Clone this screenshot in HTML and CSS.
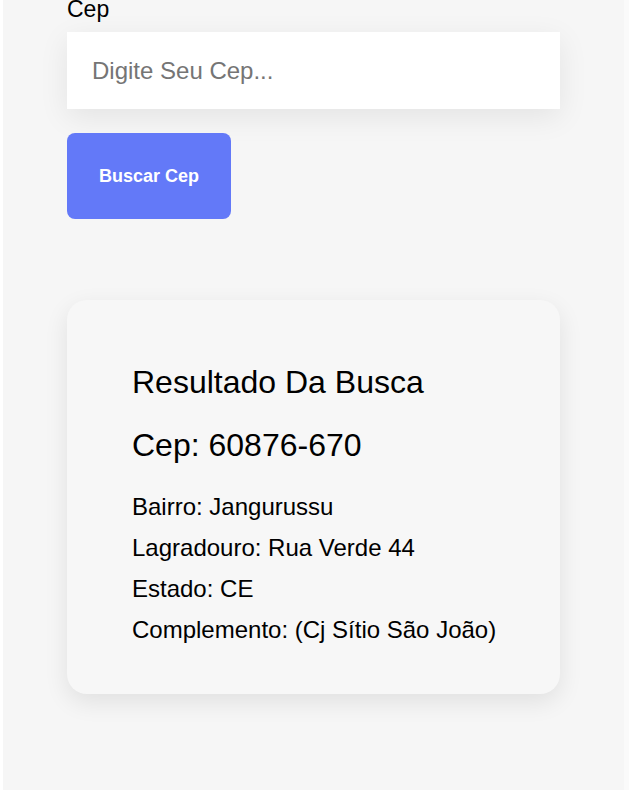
FILE: index.html
```html
<!DOCTYPE html>
<html lang="pt-BR">
<head>
<meta charset="utf-8">
<title>Buscar Cep</title>
<link rel="stylesheet" href="styles.css">
</head>
<body>
<div class="page">
  <div class="content">
    <label class="label" for="cep">Cep</label>
    <input class="input" id="cep" type="text" placeholder="Digite Seu Cep...">
    <button class="button" type="button">Buscar Cep</button>
    <section class="card">
      <h2 class="title">Resultado Da Busca</h2>
      <h2 class="cep">Cep: 60876-670</h2>
      <div class="lines">
        <p class="line">Bairro: Jangurussu</p>
        <p class="line">Lagradouro: Rua Verde 44</p>
        <p class="line">Estado: CE</p>
        <p class="line">Complemento: (Cj Sítio São João)</p>
      </div>
    </section>
  </div>
</div>
</body>
</html>
```
FILE: styles.css
```css
html, body {
  margin: 0;
  padding: 0;
  height: 100%;
}
body {
  background: #fafafa;
  font-family: "Liberation Sans", Arial, sans-serif;
  color: #000;
  overflow: hidden;
}
.page {
  width: 621px;
  height: 790px;
  border-left: 3px solid #ffffff;
  background: #f6f6f6;
  overflow: hidden;
}
.content {
  display: flex;
  flex-direction: column;
  align-items: flex-start;
  padding-left: 64px;
}
.label {
  font-size: 23px;
  line-height: 18px;
}
.input {
  box-sizing: border-box;
  margin-top: 14px;
  width: 493px;
  height: 77px;
  border: none;
  outline: none;
  background: #fff;
  padding: 0 25px;
  font-family: "Liberation Sans", Arial, sans-serif;
  font-size: 24px;
  color: #000;
  box-shadow: 0 8px 30px rgba(0, 0, 0, 0.08);
}
.input::placeholder {
  color: #757575;
}
.button {
  margin-top: 24px;
  width: 164px;
  height: 86px;
  border: none;
  border-radius: 8px;
  background: #6379f8;
  color: #fff;
  font-family: "Liberation Sans", Arial, sans-serif;
  font-weight: bold;
  font-size: 18px;
}
.card {
  box-sizing: border-box;
  margin-top: 81px;
  width: 493px;
  height: 394px;
  padding: 62px 30px 44px 65px;
  background: #f7f7f7;
  border-radius: 20px;
  box-shadow: 0 8px 24px rgba(0, 0, 0, 0.09);
}
.title, .cep {
  margin: 0;
  font-weight: normal;
  font-size: 32px;
  line-height: 40px;
}
.cep {
  margin-top: 23px;
}
.lines {
  margin-top: 21px;
}
.line {
  margin: 0;
  font-size: 24px;
  line-height: 41px;
  white-space: nowrap;
}
```
